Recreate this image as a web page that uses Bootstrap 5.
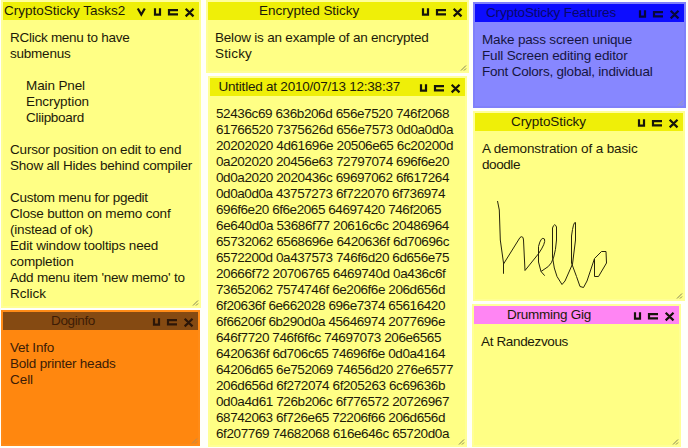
<!DOCTYPE html>
<html lang="en">
<head>
<meta charset="utf-8">
<title>CryptoSticky</title>
<link href="https://cdn.jsdelivr.net/npm/bootstrap@5.3.0/dist/css/bootstrap.min.css" rel="stylesheet">
<style>
body{background:#fffffb;font:13.5px/16px "Liberation Sans",Arial,sans-serif;color:#1c1a08;width:688px;height:448px}
.board{height:448px}
.lane-a{width:200px;margin-left:1px}
.lane-b{width:263px;margin-left:5px}
.lane-c{width:214px;margin-left:4px}
.sticky{--pad:7px;background:#ffff85;border:2px solid #ffff96;border-top-color:#ffff9c}
.bar{background:#efef08;height:18px}
.caption{line-height:17px;padding-left:var(--t)}
.memo{padding:10px 0 0 var(--pad)}
.ln{height:16px;white-space:pre}
.ctl{width:63px;height:18px;fill:none;stroke:#16140a;stroke-width:2.2}
.grip{right:0;bottom:0;width:7px;height:7px;stroke:#85855a;stroke-width:1;fill:none}
.indent{padding-left:16px}
.tasks{height:308px}
.dog{height:136px;width:199px;margin-top:2px;background:#ff870f;border-color:#ff8b17;color:#3c1c06}
.dog .bar{background:#854a12}
.dog .ctl{stroke:#2c1608}
.dog .grip{stroke:#b58a55}
.enc{height:73px}
.hex{height:371px;width:259px;margin:3px 0 0 2px}
.feat{height:106px;width:213px;margin-top:2px;background:#8787ff;border-color:#8080fa;color:#15153f}
.feat .bar{background:#0d0dff;color:#08086a}
.feat .ctl{stroke:#08083c}
.feat .grip{stroke:#9a9ab5}
.demo{height:190px;width:212px;margin-top:3px}
.gig{height:143px;width:209px;margin:3px 0 0 -1px}
.gig .bar{background:#ff85f3}
.doodle{width:140px;height:100px;margin:19px 0 0 10px;fill:none;stroke:#26240c;stroke-width:1;stroke-linejoin:round}
</style>
</head>
<body class="overflow-hidden">
<svg class="d-none">
  <symbol id="win" viewBox="0 0 63 18"><path d="M19 6.300v6.300h5V6.300M42 8.200h-9v4.200h9M49.700 6.800l7.800 7.600M57.500 6.800l-7.800 7.600"/></symbol>
  <symbol id="grip" viewBox="0 0 7 7"><path d="M1 6.500L6 1.500M4 6.500l2-2"/></symbol>
</svg>
<main class="board d-flex align-items-start">
  <section class="lane-a d-flex flex-column flex-shrink-0">
    <article class="sticky tasks position-relative">
      <header class="bar d-flex justify-content-between" style="--t:1px"><div class="caption text-nowrap"><span data-w="121.2">CryptoSticky Tasks2</span></div>
        <svg class="ctl flex-shrink-0"><path d="M1.800 6.500l3.500 6L8.800 6.500"/><use href="#win"/></svg></header>
      <div class="memo">
        <div class="ln"><span data-w="119.5">RClick menu to have</span></div>
        <div class="ln"><span data-w="60.5">submenus</span></div>
        <div class="ln"></div>
        <div class="ln indent"><span data-w="59">Main Pnel</span></div>
        <div class="ln indent"><span data-w="63">Encryption</span></div>
        <div class="ln indent"><span data-w="58">Cliipboard</span></div>
        <div class="ln"></div>
        <div class="ln"><span data-w="171.3">Cursor position on edit to end</span></div>
        <div class="ln"><span data-w="182.1">Show all Hides behind compiler</span></div>
        <div class="ln"></div>
        <div class="ln"><span data-w="137.8">Custom menu for pgedit</span></div>
        <div class="ln"><span data-w="160.5">Close button on memo conf</span></div>
        <div class="ln"><span data-w="82.7">(instead of ok)</span></div>
        <div class="ln"><span data-w="148.2">Edit window tooltips need</span></div>
        <div class="ln"><span data-w="63.5">completion</span></div>
        <div class="ln"><span data-w="174.7">Add menu item 'new memo' to</span></div>
        <div class="ln"><span data-w="36">Rclick</span></div>
      </div>
      <svg class="grip position-absolute"><use href="#grip"/></svg>
    </article>
    <article class="sticky dog position-relative">
      <header class="bar d-flex justify-content-between" style="--t:48px"><div class="caption"><span data-w="44">Doginfo</span></div><svg class="ctl"><use href="#win"/></svg></header>
      <div class="memo">
        <div class="ln"><span data-w="44">Vet Info</span></div>
        <div class="ln"><span data-w="105.5">Bold printer heads</span></div>
        <div class="ln"><span data-w="23">Cell</span></div>
      </div>
      <svg class="grip position-absolute"><use href="#grip"/></svg>
    </article>
  </section>
  <section class="lane-b d-flex flex-column flex-shrink-0">
    <article class="sticky enc position-relative">
      <header class="bar d-flex justify-content-between" style="--t:51px"><div class="caption text-nowrap"><span data-w="100.3">Encrypted Sticky</span></div><svg class="ctl"><use href="#win"/></svg></header>
      <div class="memo">
        <div class="ln"><span data-w="213.5">Below is an example of an encrypted</span></div>
        <div class="ln"><span data-w="37">Sticky</span></div>
      </div>
      <svg class="grip position-absolute"><use href="#grip"/></svg>
    </article>
    <article class="sticky hex position-relative">
      <header class="bar d-flex justify-content-between" style="--t:8.500px"><div class="caption text-nowrap"><span data-w="181.5">Untitled at 2010/07/13 12:38:37</span></div><svg class="ctl"><use href="#win"/></svg></header>
      <div class="memo" style="--pad:6px">
        <div class="ln"><span data-w="233">52436c69 636b206d 656e7520 746f2068</span></div>
        <div class="ln"><span data-w="237">61766520 7375626d 656e7573 0d0a0d0a</span></div>
        <div class="ln"><span data-w="237">20202020 4d61696e 20506e65 6c20200d</span></div>
        <div class="ln"><span data-w="233">0a202020 20456e63 72797074 696f6e20</span></div>
        <div class="ln"><span data-w="233">0d0a2020 2020436c 69697062 6f617264</span></div>
        <div class="ln"><span data-w="229">0d0a0d0a 43757273 6f722070 6f736974</span></div>
        <div class="ln"><span data-w="225">696f6e20 6f6e2065 64697420 746f2065</span></div>
        <div class="ln"><span data-w="233">6e640d0a 53686f77 20616c6c 20486964</span></div>
        <div class="ln"><span data-w="233">65732062 6568696e 6420636f 6d70696c</span></div>
        <div class="ln"><span data-w="233">6572200d 0a437573 746f6d20 6d656e75</span></div>
        <div class="ln"><span data-w="229.5">20666f72 20706765 6469740d 0a436c6f</span></div>
        <div class="ln"><span data-w="229">73652062 7574746f 6e206f6e 206d656d</span></div>
        <div class="ln"><span data-w="229">6f20636f 6e662028 696e7374 65616420</span></div>
        <div class="ln"><span data-w="229">6f66206f 6b290d0a 45646974 2077696e</span></div>
        <div class="ln"><span data-w="225">646f7720 746f6f6c 74697073 206e6565</span></div>
        <div class="ln"><span data-w="229">6420636f 6d706c65 74696f6e 0d0a4164</span></div>
        <div class="ln"><span data-w="237">64206d65 6e752069 74656d20 276e6577</span></div>
        <div class="ln"><span data-w="229">206d656d 6f272074 6f205263 6c69636b</span></div>
        <div class="ln"><span data-w="233">0d0a4d61 726b206c 6f776572 20726967</span></div>
        <div class="ln"><span data-w="229">68742063 6f726e65 72206f66 206d656d</span></div>
        <div class="ln"><span data-w="233">6f207769 74682068 616e646c 65720d0a</span></div>
      </div>
      <svg class="grip position-absolute"><use href="#grip"/></svg>
    </article>
  </section>
  <section class="lane-c d-flex flex-column flex-shrink-0">
    <article class="sticky feat position-relative">
      <header class="bar d-flex justify-content-between" style="--t:11px"><div class="caption text-nowrap"><span data-w="130">CryptoSticky Features</span></div><svg class="ctl"><use href="#win"/></svg></header>
      <div class="memo">
        <div class="ln"><span data-w="150">Make pass screen unique</span></div>
        <div class="ln"><span data-w="145.5">Full Screen editing editor</span></div>
        <div class="ln"><span data-w="170.5">Font Colors, global, individual</span></div>
      </div>
      <svg class="grip position-absolute"><use href="#grip"/></svg>
    </article>
    <article class="sticky demo position-relative">
      <header class="bar d-flex justify-content-between" style="--t:36px"><div class="caption"><span data-w="75">CryptoSticky</span></div><svg class="ctl"><use href="#win"/></svg></header>
      <div class="memo">
        <div class="ln"><span data-w="155.5">A demonstration of a basic</span></div>
        <div class="ln"><span data-w="38">doodle</span></div>
        <svg class="doodle" viewBox="492 192 140 100"><path d="M497.500 201L499.300 210L500.300 240L503.500 263V273.500V264L520 237.500Q523 235 523.500 240L525 270.500L538.300 254Q546 243 544.500 239Q541 236 538.500 246.500V262L541 271.500L544.700 275.700M541 271.500L548.300 266.500Q555 261 556.500 240V227Q554.500 222 552.500 228V257L554.300 268L557 276.500L562 284.500L565 281L572.500 264L575.500 240V222.500Q573.500 221 571.500 236V263L576.500 276.500L580 286.500L583.500 287.500L587 281L594.500 258.500L601.500 251.500H606L606.500 263L598.500 276.500H594.500V259"/></svg>
      </div>
      <svg class="grip position-absolute"><use href="#grip"/></svg>
    </article>
    <article class="sticky gig position-relative">
      <header class="bar d-flex justify-content-between" style="--t:33px"><div class="caption text-nowrap"><span data-w="84">Drumming Gig</span></div><svg class="ctl"><use href="#win"/></svg></header>
      <div class="memo">
        <div class="ln"><span data-w="87">At Randezvous</span></div>
      </div>
      <svg class="grip position-absolute"><use href="#grip"/></svg>
    </article>
  </section>
</main>
<script src="https://cdn.jsdelivr.net/npm/bootstrap@5.3.0/dist/js/bootstrap.bundle.min.js"></script>
<script>
// Track each line of text out to its own measure.
document.querySelectorAll('[data-w]').forEach(function (s) {
  var gap = (parseFloat(s.dataset.w) - s.getBoundingClientRect().width) / s.textContent.length;
  s.style.letterSpacing = gap.toFixed(3) + 'px';
});
</script>
</body>
</html>
